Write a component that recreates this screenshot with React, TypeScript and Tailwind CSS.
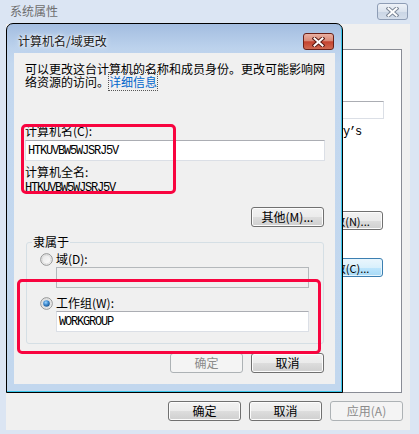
import React from "react";

function XIcon({ outline }: { outline: string }) {
  return (
    <svg width="13" height="10" viewBox="0 0 13 10">
      <path d="M2.5 1.5 L10.5 8.5 M10.5 1.5 L2.5 8.5" stroke={outline} strokeWidth="4" strokeLinecap="square" />
      <path d="M2.5 1.5 L10.5 8.5 M10.5 1.5 L2.5 8.5" stroke="#ffffff" strokeWidth="2" strokeLinecap="square" />
    </svg>
  );
}

function Radio({ checked, id }: { checked?: boolean; id: string }) {
  return (
    <svg width="13" height="13" viewBox="0 0 13 13" className="shrink-0">
      <defs>
        <linearGradient id={id + "f"} x1="0" y1="0" x2="1" y2="1">
          <stop offset="0" stopColor="#e4e4e4" />
          <stop offset="1" stopColor="#ffffff" />
        </linearGradient>
        <radialGradient id={id + "d"} cx="0.4" cy="0.35" r="0.7">
          <stop offset="0" stopColor="#9fd6ff" />
          <stop offset="0.5" stopColor="#3d8ad0" />
          <stop offset="1" stopColor="#1a4f86" />
        </radialGradient>
      </defs>
      <circle cx="6.5" cy="6.5" r="5.8" fill={`url(#${id}f)`} stroke="#8e8f8f" strokeWidth="1" />
      <circle cx="6.5" cy="6.5" r="4.3" fill="none" stroke="#d8d8d8" strokeWidth="0.8" />
      {checked && <circle cx="6.5" cy="6.5" r="3.3" fill={`url(#${id}d)`} />}
    </svg>
  );
}

function Btn({
  children,
  disabled,
  focused,
  className = "",
}: {
  children: React.ReactNode;
  disabled?: boolean;
  focused?: boolean;
  className?: string;
}) {
  const base =
    "flex items-center justify-center rounded-[3px] border text-[12px] leading-[14px] shrink-0 ";
  const look = disabled
    ? "border-[#adb2b5] bg-[#f4f4f4] text-[#8b8b8b]"
    : focused
    ? "border-[#3c7fb1] bg-[linear-gradient(#eaf6fd_0%,#d9f0fc_50%,#bee6fd_51%,#a7d9f5_100%)] text-black shadow-[inset_0_0_0_1px_#e6f5fd]"
    : "border-[#707070] bg-[linear-gradient(#f2f2f2_0%,#ebebeb_50%,#dddddd_51%,#cfcfcf_100%)] text-black shadow-[inset_0_0_0_1px_#fcfcfc]";
  return <div className={base + look + " " + className}>{children}</div>;
}

const mono = "font-['Liberation_Mono',monospace] text-[12px] tracking-[-1.2px] leading-[12px]";

export default function App() {
  return (
    <div className="relative w-[419px] h-[434px] overflow-hidden bg-[#dbe5f3] font-['Noto_Sans_CJK_SC',sans-serif] text-[12px] text-black">
      {/* Outer window: 系统属性 */}
      <div className="flex flex-col h-full">
        <div className="h-[24px] flex items-start shrink-0">
          <div className="pl-[10px] pt-[4px] leading-[14px] text-[#6e6e6e]">系统属性</div>
          <div className="ml-auto mr-[11px] mt-[3px] w-[31px] h-[17px] rounded-[3px] border border-[#8e9db5] bg-[linear-gradient(#eef2f8,#dbe3ee_50%,#c9d5e5_51%,#d4deeb)] flex items-center justify-center">
            <XIcon outline="#7d8898" />
          </div>
        </div>
        <div className="flex-1 ml-[6px] mr-[9px] mb-[4px] bg-[#f0f0f0] flex flex-col">
          <div className="mt-[25px] ml-[7px] mr-[8px] h-[344px] border border-[#898c95] bg-white flex flex-col items-end pr-[17px]">
            <div className="mt-[51px] w-[200px] h-[18px] border border-[#dbdfe6] border-t-[#abadb3] bg-white" />
            <div className={"mt-[7px] mr-[23px] " + mono}>"Mary’s</div>
            <Btn className="mt-[73px] mr-[1px] w-[73px] h-[19px] !text-[11px]">更改(N)...</Btn>
            <Btn focused className="mt-[28px] mr-[1px] w-[73px] h-[19px] !text-[11px]">更改(C)...</Btn>
          </div>
          <div className="mt-[8px] mr-[7px] flex justify-end gap-[8px]">
            <Btn className="w-[73px] h-[20px]">确定</Btn>
            <Btn className="w-[73px] h-[20px]">取消</Btn>
            <Btn disabled className="w-[73px] h-[20px]">应用(A)</Btn>
          </div>
        </div>
      </div>

      {/* Dialog: 计算机名/域更改 */}
      <div className="absolute left-[6px] top-[23px] w-[337px] h-[370px] border border-black rounded-t-[7px] bg-[linear-gradient(#a3bde0_0px,#bcd2ec_24px,#c4d8ef_40px,#c2d7ee_100%)] shadow-[inset_-1px_-1px_0_#3ac6ea] flex flex-col">
        <div className="h-[29px] flex items-start shrink-0">
          <div className="pl-[11px] pt-[10px] leading-[14px] text-[#1a1a1a] [text-shadow:0_0_6px_#ffffff,0_0_3px_#ffffff]">
            计算机名/域更改
          </div>
          <div className="ml-auto mr-[8px] mt-[9px] w-[31px] h-[17px] rounded-[3px] border border-[#6a2018] bg-[linear-gradient(#eab0a2,#d98a78_45%,#c5432f_52%,#cf6a52_100%)] flex items-center justify-center">
            <XIcon outline="#5a1a12" />
          </div>
        </div>
        <div className="flex-1 ml-[7px] mr-[7px] mb-[8px] bg-[#f0f0f0] pl-[11px] pr-[11px] pt-[9px] flex flex-col">
          <div className="h-[13px] leading-[13px] whitespace-nowrap">
            可以更改这台计算机的名称和成员身份。更改可能影响网
          </div>
          <div className="h-[13px] leading-[13px] whitespace-nowrap">
            络资源的访问。
            <span className="text-[#0066cc] outline outline-1 outline-dotted outline-[#555]">详细信息</span>
          </div>
          <div className="mt-[36px] leading-[14px]">计算机名(C):</div>
          <div className={"mt-[2px] w-[300px] h-[21px] border border-[#dbdfe6] border-t-[#abadb3] bg-white flex items-center pl-[2px] " + mono}>
            HTKUVBW5WJSRJ5V
          </div>
          <div className="mt-[4px] leading-[14px]">计算机全名:</div>
          <div className={"mt-[3px] " + mono}>HTKUVBW5WJSRJ5V</div>
          <Btn className="self-end mt-[13px] w-[73px] h-[20px]">其他(M)...</Btn>

          <div className="relative mt-[15px] ml-[1px] w-[298px] h-[102px] border border-[#d5dfe5] rounded-[3px] pt-[9px] pl-[13px] flex flex-col">
            <div className="absolute -top-[8px] left-[5px] px-[1px] bg-[#f0f0f0] leading-[14px]">隶属于</div>
            <div className="h-[14px] flex items-center gap-[3px]">
              <Radio id="r1" />
              <span className="leading-[14px]">域(D):</span>
            </div>
            <div className="mt-[1px] ml-[16px] w-[253px] h-[21px] border border-[#b4b8bb] bg-[#f0f0f0]" />
            <div className="mt-[8px] h-[14px] flex items-center gap-[3px]">
              <Radio id="r2" checked />
              <span className="leading-[14px]">工作组(W):</span>
            </div>
            <div className={"mt-[1px] ml-[16px] w-[253px] h-[21px] border border-[#dbdfe6] border-t-[#abadb3] bg-white flex items-center pl-[2px] " + mono}>
              WORKGROUP
            </div>
          </div>

          <div className="self-end mt-[9px] flex gap-[8px]">
            <Btn disabled className="w-[73px] h-[20px]">确定</Btn>
            <Btn className="w-[73px] h-[20px]">取消</Btn>
          </div>
        </div>
      </div>

      {/* Red annotation boxes */}
      <div className="absolute left-[21px] top-[124px] w-[155px] h-[70px] border-[3px] border-[#f8043f] rounded-[5px]" />
      <div className="absolute left-[17px] top-[279px] w-[304px] h-[75px] border-[3px] border-[#f8043f] rounded-[5px]" />
    </div>
  );
}
